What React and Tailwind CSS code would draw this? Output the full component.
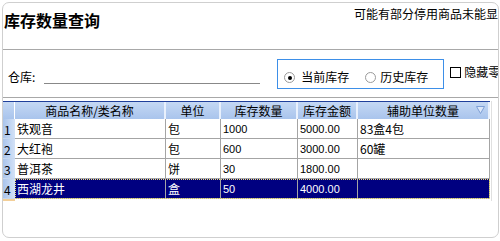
import React from "react";

const cols = [
  { key: "name", label: "商品名称/类名称", w: "w-[151px]" },
  { key: "unit", label: "单位", w: "w-[55px]" },
  { key: "qty", label: "库存数量", w: "w-[77px]" },
  { key: "amount", label: "库存金额", w: "w-[60px]" },
  { key: "aux", label: "辅助单位数量", w: "w-[132px]" },
];

const rows = [
  { name: "铁观音", unit: "包", qty: "1000", amount: "5000.00", aux: "83盒4包" },
  { name: "大红袍", unit: "包", qty: "600", amount: "3000.00", aux: "60罐" },
  { name: "普洱茶", unit: "饼", qty: "30", amount: "1800.00", aux: "" },
  { name: "西湖龙井", unit: "盒", qty: "50", amount: "4000.00", aux: "" },
];

const font = "font-['Noto_Sans_CJK_SC','Noto_Sans',sans-serif]";

export default function App() {
  return (
    <div className={`w-[500px] h-[241px] bg-white overflow-hidden ${font} text-[12px] text-black`}>
      <div className="ml-[2px] mt-[2px] w-[497px] h-[236px] border border-[#cfcfcf] rounded-[7px] overflow-hidden flex flex-col">
        {/* Title bar */}
        <div className="h-[47px] border-b border-[#a8a8a8] flex justify-between shrink-0">
          <div className="pl-[1px] pt-[7px] text-[16px] font-bold leading-[20px] whitespace-nowrap">库存数量查询</div>
          <div className="pt-[4px] leading-[14px] whitespace-nowrap">可能有部分停用商品未能显</div>
        </div>

        {/* Filters */}
        <div className="h-[48px] border-b border-[#a8a8a8] flex items-start shrink-0 whitespace-nowrap">
          <div className="flex items-end pl-[5px] pt-[20px] shrink-0">
            <span className="leading-[14px]">仓库:</span>
            <div className="ml-[9px] w-[216px] border-b border-[#888888] h-[14px]"></div>
          </div>
          <div className="ml-[17px] mt-[9px] w-[167px] h-[30px] shrink-0 border border-[#3d8fe8] flex items-end pb-[4px] pl-[6px]">
            <span className="w-[11px] h-[11px] shrink-0 rounded-full border border-[#9a9a9a] flex items-center justify-center mb-[1px]">
              <span className="w-[4px] h-[4px] rounded-full bg-black"></span>
            </span>
            <span className="ml-[6px] leading-[14px]">当前库存</span>
            <span className="ml-[16px] w-[11px] h-[11px] shrink-0 rounded-full border border-[#9a9a9a] mb-[1px]"></span>
            <span className="ml-[4px] leading-[14px]">历史库存</span>
          </div>
          <div className="ml-[6px] mt-[15px] flex items-center shrink-0">
            <span className="w-[11px] h-[11px] border border-black bg-white"></span>
            <span className="ml-[3px] leading-[14px]">隐藏零</span>
          </div>
        </div>

        {/* Grid */}
        <div className="mt-[3px] flex">
          <div className="w-[487px] border-t border-[#1f3f9a]">
            <div className="flex h-[17px] bg-gradient-to-b from-[#c4d8f4] to-[#a9c4ec]">
              <div className="w-[12px] border-r border-white"></div>
              {cols.map((c, i) => (
                <div key={c.key} className={`${c.w} relative flex items-center justify-center border-r-2 border-r-[#e8f0fc] leading-[14px] whitespace-nowrap`}>
                  {c.label}
                  {i === cols.length - 1 && (
                    <svg className="absolute right-[3px] top-[4px]" width="9" height="8" viewBox="0 0 9 8">
                      <path d="M0.5 0.5 H8.5 L4.5 7.5 Z" fill="#dce8fa" stroke="#7d9fd6" strokeWidth="1" />
                    </svg>
                  )}
                </div>
              ))}
            </div>
            {rows.map((r, idx) => {
              const sel = idx === 3;
              return (
                <div key={idx} className="flex h-[20px]">
                  <div className="w-[12px] bg-gradient-to-r from-[#a9c4ec] to-[#d4e2f6] border-b border-[#c7d7ee] flex items-end pl-[1px] pb-[1px] leading-[14px]">
                    {idx + 1}
                  </div>
                  <div className={`flex ${sel ? "bg-[#000080] text-white outline-1 outline-dotted outline-offset-[-1px] outline-[#f0e070]" : ""}`}>
                    {cols.map((c) => (
                      <div
                        key={c.key}
                        className={`${c.w} border-r border-b border-[#a4a4a4] flex items-center pl-[2px] leading-[14px] whitespace-nowrap ${
                          c.key === "qty" || c.key === "amount" ? "font-['Liberation_Sans',sans-serif] text-[11px]" : ""
                        }`}
                      >
                        {r[c.key]}
                      </div>
                    ))}
                  </div>
                </div>
              );
            })}
            <div className="w-[12px] h-[2px] bg-[#f3cf98]"></div>
          </div>
          <div className="w-[1px] bg-[#e0e0e0] ml-[1px]"></div>
        </div>
      </div>
    </div>
  );
}
